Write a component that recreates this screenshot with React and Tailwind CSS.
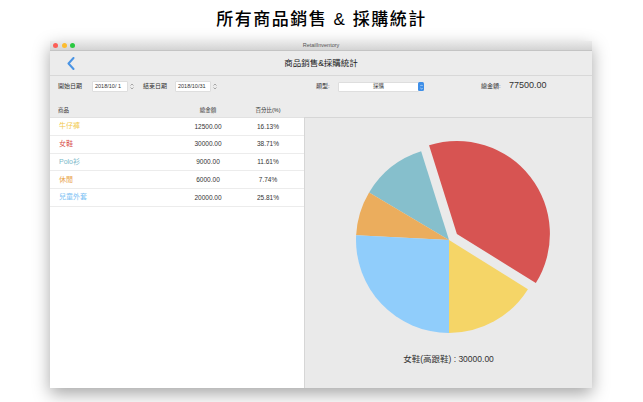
import React from 'react';

const rows = [
  { name: '牛仔褲', amount: '12500.00', pct: '16.13%', color: 'text-[#f2c94c]' },
  { name: '女鞋', amount: '30000.00', pct: '38.71%', color: 'text-[#d9534f]' },
  { name: 'Polo衫', amount: '9000.00', pct: '11.61%', color: 'text-[#7cb9c9]' },
  { name: '休閒', amount: '6000.00', pct: '7.74%', color: 'text-[#e9a54c]' },
  { name: '兒童外套', amount: '20000.00', pct: '25.81%', color: 'text-[#7cc2f4]' },
];

const slices = [
  { pct: 16.13, fill: '#f5d567' },
  { pct: 38.71, fill: '#d75452', explode: true },
  { pct: 11.61, fill: '#86bfcc' },
  { pct: 7.74, fill: '#ebad5d' },
  { pct: 25.81, fill: '#90cdfb' },
];

// clock angle in degrees: 0 = up, 90 = right
function pt(cx, cy, r, deg) {
  const a = (deg * Math.PI) / 180;
  return [cx + r * Math.sin(a), cy - r * Math.cos(a)];
}

function Pie() {
  const r = 93;
  let start = 180;
  return (
    <svg width="210" height="210" viewBox="0 0 210 210">
      {slices.map((s, i) => {
        const sweep = (s.pct / 100) * 360;
        const a1 = start;
        const a2 = start - sweep;
        start = a2;
        let cx = 105;
        let cy = 105;
        if (s.explode) {
          const [ox, oy] = pt(0, 0, 10, (a1 + a2) / 2);
          cx += ox;
          cy += oy;
        }
        const [x1, y1] = pt(cx, cy, r, a1);
        const [x2, y2] = pt(cx, cy, r, a2);
        const large = sweep > 180 ? 1 : 0;
        return (
          <path
            key={i}
            d={`M${cx},${cy} L${x1},${y1} A${r},${r} 0 ${large} 0 ${x2},${y2} Z`}
            fill={s.fill}
          />
        );
      })}
    </svg>
  );
}

function Stepper() {
  return (
    <svg width="4" height="7" viewBox="0 0 4 7" className="ml-[3px]">
      <path d="M0.5 2.5 L2 1 L3.5 2.5 M0.5 4.5 L2 6 L3.5 4.5" stroke="#888" strokeWidth="0.7" fill="none" />
    </svg>
  );
}

function DateField({ value }) {
  return (
    <div className="flex items-center">
      <div className="w-[34px] h-[9px] bg-white flex items-center pl-[2px] text-[5.5px] text-[#333] shadow-[0_0_0_0.5px_#d0d0d0]">
        {value}
      </div>
      <Stepper />
    </div>
  );
}

export default function App() {
  return (
    <div className="w-[643px] h-[402px] bg-white overflow-hidden font-['Liberation_Sans','Noto_Sans_CJK_TC',sans-serif]">
      <div className="h-[41px] flex items-center justify-center">
        <h1 className="text-[17px] font-medium tracking-[1.5px] text-black leading-none mt-[-2px]">
          所有商品銷售 &amp; 採購統計
        </h1>
      </div>

      <div className="ml-[50px] w-[542px] h-[347px] flex flex-col bg-[#ececec] shadow-[0_6px_16px_rgba(0,0,0,0.35)]">
        {/* title bar */}
        <div className="h-[10px] relative flex items-center justify-center bg-gradient-to-b from-[#ebebeb] to-[#d4d4d4] border-b border-[#c4c4c4]">
          <div className="absolute left-[3px] top-[2px] flex gap-[3.5px]">
            <span className="w-[5px] h-[5px] rounded-full bg-[#fc5f57]" />
            <span className="w-[5px] h-[5px] rounded-full bg-[#fdbc2e]" />
            <span className="w-[5px] h-[5px] rounded-full bg-[#2ac840]" />
          </div>
          <span className="text-[5.5px] text-[#555] leading-none">RetailInventory</span>
        </div>

        {/* header */}
        <div className="h-[25px] relative flex items-center justify-center border-b border-[#d8d8d8]">
          <svg width="8" height="13" viewBox="0 0 8 13" className="absolute left-[17px] top-[6px]">
            <path d="M6.5 1 L1.5 6.5 L6.5 12" stroke="#4a94e4" strokeWidth="2" fill="none" strokeLinecap="round" strokeLinejoin="round" />
          </svg>
          <span className="text-[8.5px] text-[#222] leading-none">商品銷售&amp;採購統計</span>
        </div>

        {/* filters */}
        <div className="h-[21px] flex items-center pl-[8px] text-[6px] text-[#333]">
          <span className="w-[35px]">開始日期</span>
          <DateField value="2018/10/  1" />
          <span className="ml-[9px] w-[33px]">結束日期</span>
          <DateField value="2018/10/31" />
          <span className="ml-[99px] w-[23px]">類型:</span>
          <div className="flex items-center">
            <div className="w-[79px] h-[8px] bg-white flex items-center justify-center text-[5.5px] shadow-[0_0_0_0.5px_#d0d0d0]">
              採購
            </div>
            <div className="w-[6px] h-[9px] rounded-[1.5px] bg-[#3f8fe8] flex items-center justify-center">
              <svg width="3" height="6" viewBox="0 0 3 6">
                <path d="M0.4 2 L1.5 0.9 L2.6 2 M0.4 4 L1.5 5.1 L2.6 4" stroke="#fff" strokeWidth="0.6" fill="none" />
              </svg>
            </div>
          </div>
          <span className="ml-[57px] w-[28px]">總金額:</span>
          <span className="text-[9px] text-[#333] mt-[-2px]">77500.00</span>
        </div>

        {/* table header */}
        <div className="h-[20px] flex items-center pl-[8px] text-[5.5px] text-[#333] pt-[6px]">
          <span className="w-[120px]">商品</span>
          <span className="w-[60px] text-center">總金額</span>
          <span className="w-[60px] text-center">百分比(%)</span>
        </div>

        {/* body */}
        <div className="flex-1 flex min-h-0">
          <div className="w-[254px] bg-white border-t border-[#e2e2e2]">
            {rows.map((r) => (
              <div key={r.name} className="h-[17.8px] flex items-center pl-[9px] pr-[6px] border-b border-[#ececec]">
                <span className={`w-[119px] text-[7px] ${r.color}`}>{r.name}</span>
                <span className="w-[60px] text-center text-[6.5px] text-[#333]">{r.amount}</span>
                <span className="w-[60px] text-center text-[6.5px] text-[#333]">{r.pct}</span>
              </div>
            ))}
          </div>
          <div className="flex-1 flex flex-col items-center bg-[#eaeaea] border-l border-t border-[#d6d6d6] pt-[17px]">
            <Pie />
            <span className="mt-[8px] text-[8.5px] text-[#333]">女鞋(高跟鞋) : 30000.00</span>
          </div>
        </div>
      </div>
    </div>
  );
}
